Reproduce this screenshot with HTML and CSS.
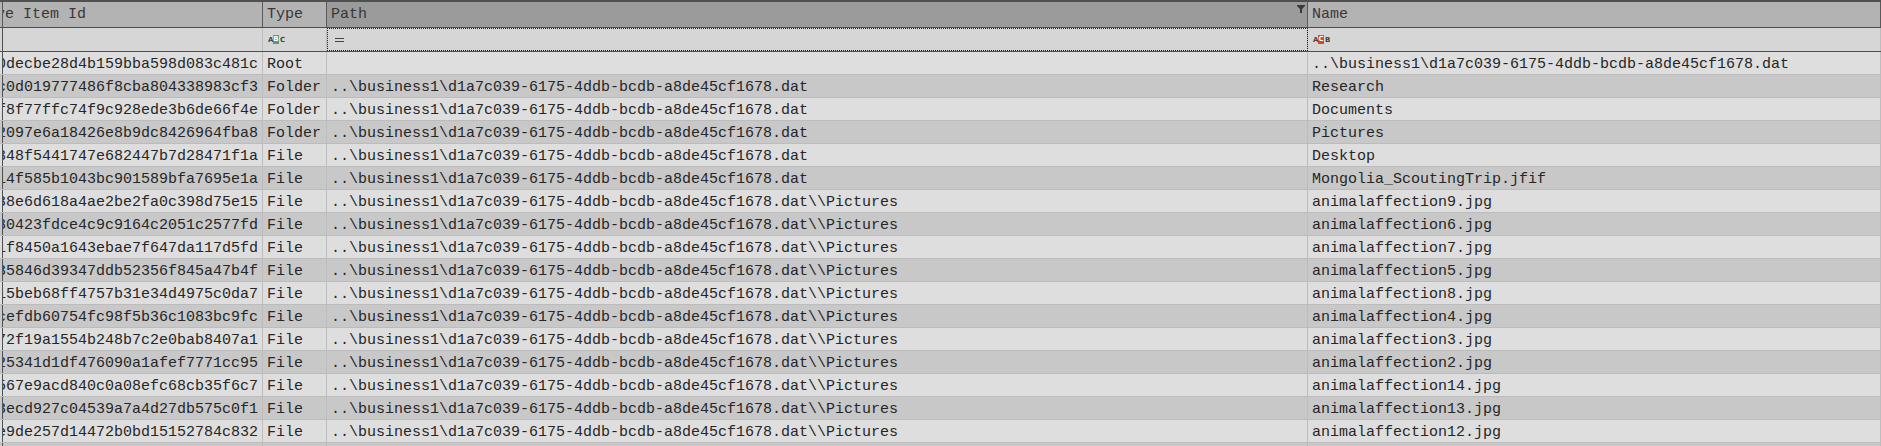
FILE: index.html
```html
<!DOCTYPE html>
<html>
<head>
<meta charset="utf-8">
<link rel="stylesheet" href="styles.css">
</head>
<body>
<div class="grid">
  <div class="row hdr">
    <div class="cell pre"></div>
    <div class="cell id"><span class="shift">Drive Item Id</span></div>
    <div class="cell">Type</div>
    <div class="cell path active">Path
      <svg class="funnel" width="8" height="8" viewBox="0 0 8 8"><path d="M0 0H8V1L5 4V8H3V4L0 1Z" fill="#3a3a3a"/></svg>
    </div>
    <div class="cell">Name</div>
  </div>
  <div class="row flt">
    <div class="cell pre"></div>
    <div class="cell id"></div>
    <div class="cell"><span class="ficon"><i>A</i><b class="green">B</b><i>C</i></span></div>
    <div class="cell path focus"><svg class="eq" width="9" height="4" viewBox="0 0 9 4"><path d="M0 0.5H9M0 3.5H9" stroke="#444" stroke-width="1"/></svg></div>
    <div class="cell"><span class="ficon"><i>A</i><b class="red">C</b><i>B</i></span></div>
  </div>
  <div class="row"><div class="cell pre"></div><div class="cell id">c0decbe28d4b159bba598d083c481c</div><div class="cell">Root</div><div class="cell"></div><div class="cell">..\business1\d1a7c039-6175-4ddb-bcdb-a8de45cf1678.dat</div></div>
  <div class="row alt"><div class="cell pre"></div><div class="cell id">7c0d019777486f8cba804338983cf3</div><div class="cell">Folder</div><div class="cell">..\business1\d1a7c039-6175-4ddb-bcdb-a8de45cf1678.dat</div><div class="cell">Research</div></div>
  <div class="row"><div class="cell pre"></div><div class="cell id">0ff8f77ffc74f9c928ede3b6de66f4e</div><div class="cell">Folder</div><div class="cell">..\business1\d1a7c039-6175-4ddb-bcdb-a8de45cf1678.dat</div><div class="cell">Documents</div></div>
  <div class="row alt"><div class="cell pre"></div><div class="cell id">8a2097e6a18426e8b9dc8426964fba8</div><div class="cell">Folder</div><div class="cell">..\business1\d1a7c039-6175-4ddb-bcdb-a8de45cf1678.dat</div><div class="cell">Pictures</div></div>
  <div class="row"><div class="cell pre"></div><div class="cell id">5e348f5441747e682447b7d28471f1a</div><div class="cell">File</div><div class="cell">..\business1\d1a7c039-6175-4ddb-bcdb-a8de45cf1678.dat</div><div class="cell">Desktop</div></div>
  <div class="row alt"><div class="cell pre"></div><div class="cell id">b14f585b1043bc901589bfa7695e1a</div><div class="cell">File</div><div class="cell">..\business1\d1a7c039-6175-4ddb-bcdb-a8de45cf1678.dat</div><div class="cell">Mongolia_ScoutingTrip.jfif</div></div>
  <div class="row"><div class="cell pre"></div><div class="cell id">e38e6d618a4ae2be2fa0c398d75e15</div><div class="cell">File</div><div class="cell">..\business1\d1a7c039-6175-4ddb-bcdb-a8de45cf1678.dat\\Pictures</div><div class="cell">animalaffection9.jpg</div></div>
  <div class="row alt"><div class="cell pre"></div><div class="cell id">d80423fdce4c9c9164c2051c2577fd</div><div class="cell">File</div><div class="cell">..\business1\d1a7c039-6175-4ddb-bcdb-a8de45cf1678.dat\\Pictures</div><div class="cell">animalaffection6.jpg</div></div>
  <div class="row"><div class="cell pre"></div><div class="cell id">a1f8450a1643ebae7f647da117d5fd</div><div class="cell">File</div><div class="cell">..\business1\d1a7c039-6175-4ddb-bcdb-a8de45cf1678.dat\\Pictures</div><div class="cell">animalaffection7.jpg</div></div>
  <div class="row alt"><div class="cell pre"></div><div class="cell id">635846d39347ddb52356f845a47b4f</div><div class="cell">File</div><div class="cell">..\business1\d1a7c039-6175-4ddb-bcdb-a8de45cf1678.dat\\Pictures</div><div class="cell">animalaffection5.jpg</div></div>
  <div class="row"><div class="cell pre"></div><div class="cell id">c15beb68ff4757b31e34d4975c0da7</div><div class="cell">File</div><div class="cell">..\business1\d1a7c039-6175-4ddb-bcdb-a8de45cf1678.dat\\Pictures</div><div class="cell">animalaffection8.jpg</div></div>
  <div class="row alt"><div class="cell pre"></div><div class="cell id">2cefdb60754fc98f5b36c1083bc9fc</div><div class="cell">File</div><div class="cell">..\business1\d1a7c039-6175-4ddb-bcdb-a8de45cf1678.dat\\Pictures</div><div class="cell">animalaffection4.jpg</div></div>
  <div class="row"><div class="cell pre"></div><div class="cell id">f72f19a1554b248b7c2e0bab8407a1</div><div class="cell">File</div><div class="cell">..\business1\d1a7c039-6175-4ddb-bcdb-a8de45cf1678.dat\\Pictures</div><div class="cell">animalaffection3.jpg</div></div>
  <div class="row alt"><div class="cell pre"></div><div class="cell id">e25341d1df476090a1afef7771cc95</div><div class="cell">File</div><div class="cell">..\business1\d1a7c039-6175-4ddb-bcdb-a8de45cf1678.dat\\Pictures</div><div class="cell">animalaffection2.jpg</div></div>
  <div class="row"><div class="cell pre"></div><div class="cell id">b567e9acd840c0a08efc68cb35f6c7</div><div class="cell">File</div><div class="cell">..\business1\d1a7c039-6175-4ddb-bcdb-a8de45cf1678.dat\\Pictures</div><div class="cell">animalaffection14.jpg</div></div>
  <div class="row alt"><div class="cell pre"></div><div class="cell id">83ecd927c04539a7a4d27db575c0f1</div><div class="cell">File</div><div class="cell">..\business1\d1a7c039-6175-4ddb-bcdb-a8de45cf1678.dat\\Pictures</div><div class="cell">animalaffection13.jpg</div></div>
  <div class="row"><div class="cell pre"></div><div class="cell id">ae9de257d14472b0bd15152784c832</div><div class="cell">File</div><div class="cell">..\business1\d1a7c039-6175-4ddb-bcdb-a8de45cf1678.dat\\Pictures</div><div class="cell">animalaffection12.jpg</div></div>
  <div class="row alt"><div class="cell pre"></div><div class="cell id"></div><div class="cell"></div><div class="cell"></div><div class="cell"></div></div>
</div>
</body>
</html>
```

FILE: styles.css
```css
* { box-sizing: border-box; }
html, body { margin: 0; padding: 0; }
body {
  background: #dedede;
  font-family: "Liberation Mono", "DejaVu Sans Mono", monospace;
  font-size: 15px;
  color: #262626;
  overflow: hidden;
}
.grid {
  width: 1881px;
  height: 446px;
  overflow: hidden;
  border-top: 2px solid #505050;
}
.row {
  display: grid;
  grid-template-columns: 3px 260px 64px 981px 1fr;
  height: 23px;
  background: #dedede;
  border-bottom: 1px solid #bcbcbc;
}
.row.alt { background: #c8c8c8; }
.cell {
  display: flex;
  align-items: center;
  padding-left: 4px;
  padding-top: 2px;
  white-space: nowrap;
  overflow: hidden;
  border-right: 1px solid #bdbdbd;
  min-width: 0;
}
.cell.pre { padding: 0; border-right: 1px solid #505050; }
.cell.id { justify-content: flex-end; padding-left: 0; padding-right: 4px; }
.row.hdr {
  height: 26px;
  background: #b3b3b3;
  border-bottom: 1px solid #4f4f4f;
  color: #383838;
}
.row.hdr .cell { border-right-color: #5a5a5a; padding-top: 0; padding-bottom: 1px; }
.row.hdr .cell.id { justify-content: flex-start; padding: 0 0 1px 0; }
.shift { margin-left: -34px; }
.cell.path.active { background: #9b9b9b; position: relative; }
.funnel { position: absolute; right: 2px; top: 3px; }
.row.flt {
  height: 24px;
  background: #d6d6d6;
  border-bottom: 1px solid #4f4f4f;
}
.row.flt .cell { padding-top: 0; }
.row.flt .cell.pre { border-right-color: #505050; }
.cell.focus { outline: 1px dotted #222; outline-offset: -1px; padding-left: 8px; }
.ficon {
  display: inline-flex;
  align-items: center;
  font-family: "DejaVu Sans", sans-serif;
  font-size: 7px;
  font-weight: bold;
  color: #444;
  margin-left: 1px;
  gap: 1px;
}
.ficon i { font-style: normal; width: 4px; text-align: center; }
.ficon b {
  display: inline-block;
  width: 6px;
  height: 9px;
  line-height: 9px;
  text-align: center;
  color: #fff;
}
.ficon b.green { background: #5a9a7c; }
.ficon b.red { background: #d44a26; }
```
